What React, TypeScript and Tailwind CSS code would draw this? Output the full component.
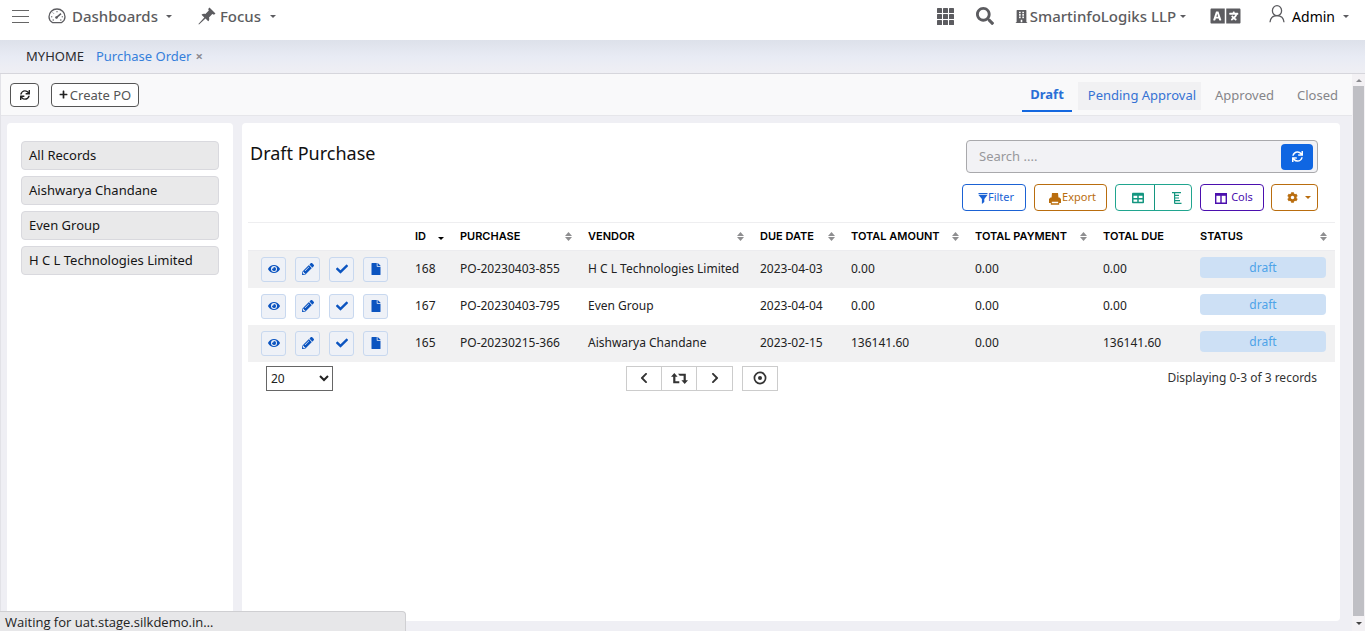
import React from "react";
import {
  FaBuilding,
  FaCheck,
  FaChevronLeft,
  FaChevronRight,
  FaCog,
  FaEye,
  FaFile,
  FaLanguage,
  FaPencilAlt,
  FaPlus,
  FaSearch,
  FaSync,
  FaTable,
} from "react-icons/fa";

const Caret = ({ className = "" }: { className?: string }) => (
  <svg viewBox="0 0 8 4" className={`h-[3px] w-[6px] ${className}`} fill="currentColor" aria-hidden="true">
    <path d="M0 0h8L4 4z" />
  </svg>
);

const GaugeIcon = () => (
  <svg viewBox="0 0 18 16" className="h-4 w-[18px]" fill="none" stroke="currentColor" strokeWidth="1.3" aria-hidden="true">
    <path d="M4 14.2C2.200 13 1 11.200 1 8.700a8 7.700 0 0 1 16 0c0 2.500-1.200 4.300-3 5.500q-.6.5-1.400.5H5.400q-.8 0-1.400-.5z" />
    <path d="M8 9.800 13 5.700" strokeWidth="1.500" />
    <circle cx="8.500" cy="9.500" r="1.300" fill="currentColor" stroke="none" />
    <path d="M9 3v1.300M4.800 4.600l.9.9M3 8.800h1.300M15 8.800h-1.300M4.500 12h1.500M12 12h1.500" strokeWidth="1" />
  </svg>
);

const PinIcon = () => (
  <svg viewBox="0 0 18 18" className="h-[18px] w-[18px]" fill="currentColor" aria-hidden="true">
    <path d="M11.500.5 17.500 6.500 16 7.700l-1.700-.6-3.300 3.300c.6 1.600.2 3-.8 3.900L7.500 11.600 1 17.500l-.6-.6L6.300 10.400 3.500 7.700c1-1 2.400-1.300 3.900-.8l3.400-3.300-.6-1.600z" />
  </svg>
);

const GridIcon = () => (
  <svg viewBox="0 0 17 17" className="h-[17px] w-[17px]" fill="currentColor" aria-hidden="true">
    {[0, 6, 12].map((y) => [0, 6, 12].map((x) => <rect key={`${x}-${y}`} x={x} y={y} width="5" height="5" rx=".6" />))}
  </svg>
);

const UserIcon = () => (
  <svg viewBox="0 0 16 18" className="mb-1 h-[18px] w-4" fill="none" stroke="currentColor" strokeWidth="1.300" aria-hidden="true">
    <ellipse cx="8" cy="5.700" rx="4.600" ry="5" />
    <path d="M1 17.300C1.400 13.200 4 10.700 8 10.700s6.600 2.500 7 6.600" />
  </svg>
);

const FunnelIcon = () => (
  <svg viewBox="0 0 10 11" className="mt-[2px] h-[11px] w-[10px]" fill="currentColor" aria-hidden="true">
    <path d="M.5 0h9v1.300h-9zM.5 2h9L6.300 6v3L3.900 11V6z" />
  </svg>
);

const PrinterIcon = () => (
  <svg viewBox="0 0 12 12" className="mt-[2px] h-3 w-3" fill="currentColor" aria-hidden="true">
    <path d="M3 0h6l.5 5h-7z" />
    <path fillRule="evenodd" d="M1.500 4.500h9L12 6v4h-1.800v1.800H1.800V10H0V6zM2.800 8.700v1.600h6.400V8.700z" />
  </svg>
);

const ColumnsIcon = () => (
  <svg viewBox="0 0 12 11" className="mt-[2px] h-[11px] w-3" fill="none" stroke="currentColor" strokeWidth="1.400" aria-hidden="true">
    <path d="M.7.7h10.600v9.600H.7zM6 2v8" />
    <path d="M0 1.600h12" strokeWidth="2.400" />
  </svg>
);

const TreeIcon = () => (
  <svg viewBox="0 0 10 12" className="h-3 w-[10px]" fill="none" stroke="currentColor" strokeWidth="1.200" aria-hidden="true">
    <path d="M0 .6h9M2.600.6v10.800M2.600 11.400H9.500M2.600 3.400h4.400M2.600 6h4.400M2.600 8.700h5.400" />
  </svg>
);

const RepeatIcon = () => (
  <svg viewBox="0 0 17 11" className="h-[11px] w-[17px]" fill="currentColor" aria-hidden="true">
    <path d="M3.300 0 6.600 3.800H4.400v4.400h3.900v2H2.200V3.800H0zM7 .8h7.800v6.400H17L13.700 11l-3.300-3.800h2.200V2.800H8.700z" />
  </svg>
);

const TargetIcon = () => (
  <svg viewBox="0 0 14 14" className="h-[14px] w-[14px]" aria-hidden="true">
    <circle cx="7" cy="7" r="5.600" fill="none" stroke="currentColor" strokeWidth="1.700" />
    <circle cx="7" cy="7" r="2" fill="currentColor" />
  </svg>
);

const SortIcon = () => (
  <svg viewBox="0 0 7 9" className="h-[9px] w-[7px] shrink-0 text-[#8e8e90]" fill="currentColor" aria-hidden="true">
    <path d="M0 4 3.500 0 7 4zM0 5h7L3.500 9z" />
  </svg>
);

const columns = [
  { label: "ID", width: "w-[45px]", sort: "desc" },
  { label: "PURCHASE", width: "w-32", sort: "both" },
  { label: "VENDOR", width: "", sort: "both" },
  { label: "DUE DATE", width: "w-[91px]", sort: "both" },
  { label: "TOTAL AMOUNT", width: "w-[124px]", sort: "both" },
  { label: "TOTAL PAYMENT", width: "w-32", sort: "both" },
  { label: "TOTAL DUE", width: "w-[97px]", sort: "" },
  { label: "STATUS", width: "w-[143px]", sort: "both" },
];

const rows = [
  ["168", "PO-20230403-855", "H C L Technologies Limited", "2023-04-03", "0.00", "0.00", "0.00"],
  ["167", "PO-20230403-795", "Even Group", "2023-04-04", "0.00", "0.00", "0.00"],
  ["165", "PO-20230215-366", "Aishwarya Chandane", "2023-02-15", "136141.60", "0.00", "136141.60"],
];

const actions = [
  { label: "View", Icon: FaEye },
  { label: "Edit", Icon: FaPencilAlt },
  { label: "Approve", Icon: FaCheck },
  { label: "Document", Icon: FaFile },
];

const vendors = ["All Records", "Aishwarya Chandane", "Even Group", "H C L Technologies Limited"];

function Header() {
  return (
    <header className="flex h-10 shrink-0 items-start justify-between bg-white pr-4 pl-3 text-[14px] font-medium text-[#5c5c60]">
      <nav className="flex h-8 items-center">
        <button aria-label="Toggle menu" className="flex w-[17px] flex-col gap-[5px]">
          <span className="h-px w-full bg-[#666]" />
          <span className="h-px w-full bg-[#666]" />
          <span className="h-px w-full bg-[#666]" />
        </button>
        <button className="ml-[19px] flex items-center">
          <GaugeIcon />
          <span className="ml-[6px] text-[15px] leading-5">Dashboards</span>
          <Caret className="ml-2" />
        </button>
        <button className="ml-[26px] flex items-center">
          <PinIcon />
          <span className="ml-1 text-[15px] leading-5">Focus</span>
          <Caret className="ml-[9px]" />
        </button>
      </nav>
      <div className="flex h-8 items-center">
        <button aria-label="Apps"><GridIcon /></button>
        <button aria-label="Search" className="ml-[22px]"><FaSearch className="size-[18px]" /></button>
        <button className="ml-[21px] flex items-center">
          <FaBuilding className="size-[13px]" />
          <span className="ml-[2px] text-[15px] leading-5">SmartinfoLogiks LLP</span>
          <Caret className="ml-[4px]" />
        </button>
        <button aria-label="Language" className="ml-[24px]"><FaLanguage className="h-6 w-[31px]" /></button>
        <button className="ml-[28px] flex items-center">
          <UserIcon />
          <span className="ml-[7px] font-normal text-black">Admin</span>
          <Caret className="ml-2" />
        </button>
      </div>
    </header>
  );
}

function Toolbar() {
  return (
    <div className="flex h-[42px] shrink-0 items-center justify-between border-b border-[#e6e6ea] bg-[#f9f9fa] pl-[9px]">
      <div className="flex gap-3">
        <button aria-label="Reload" className="flex h-6 w-[29px] items-center justify-center rounded-[4px] border border-[#555] bg-white text-[#222]">
          <FaSync className="size-[10px]" />
        </button>
        <button className="flex h-6 w-[88px] items-center justify-center gap-[2px] rounded-[4px] border border-[#555] bg-white text-[13px] leading-5 text-[#555]">
          <FaPlus className="size-[9px] text-[#222]" />
          Create PO
        </button>
      </div>
      <nav className="flex h-full items-center pt-[3px] pr-1 text-[13px] text-[#858589]">
        <a href="#draft" className="mr-[6px] flex h-8 items-center border-b-2 border-[#1468e0] px-2 font-bold text-[#2a6fd6]">Draft</a>
        <a href="#pending" className="flex h-7 items-center bg-[#f1f1f3] pr-[5px] pl-[10px] text-[#3572d3]">Pending Approval</a>
        <a href="#approved" className="flex h-7 items-center pr-3 pl-[14px]">Approved</a>
        <a href="#closed" className="flex h-7 items-center pr-[10px] pl-[11px]">Closed</a>
      </nav>
    </div>
  );
}

function Sidebar() {
  return (
    <aside className="w-[226px] shrink-0 rounded-t bg-white px-[14px] pt-[18px]">
      <ul className="flex flex-col gap-[6px]">
        {vendors.map((name) => (
          <li key={name}>
            <button className="h-[29px] w-full rounded-[4px] border border-[#d9d9de] bg-[#e9e9ea] px-[7px] text-left text-[13px] text-[#151515]">
              {name}
            </button>
          </li>
        ))}
      </ul>
    </aside>
  );
}

const outline = "flex h-[27px] items-center justify-center rounded-[4px] border text-[11px]";

function Controls() {
  return (
    <div className="flex flex-col items-end">
      <label className="flex h-[33px] w-[352px] items-center rounded-[4px] border border-[#a9a9ac] bg-[#f2f2f5] pr-1 pl-3">
        <input aria-label="Search" placeholder="Search ...." className="min-w-0 flex-1 bg-transparent text-[13px] outline-none placeholder:text-[#98989c]" />
        <button aria-label="Run search" className="flex h-[26px] w-8 items-center justify-center rounded-[4px] bg-[#0f66e2] text-white">
          <FaSync className="size-[11px]" />
        </button>
      </label>
      <div className="mt-[11px] flex">
        <button className={`${outline} w-16 border-[#1b62d4] pl-1 text-[#1b62d4]`}>
          <FunnelIcon />
          Filter
        </button>
        <button className={`${outline} ml-2 w-[73px] gap-px border-[#b96d0e] pl-1 text-[#b96d0e]`}>
          <PrinterIcon />
          Export
        </button>
        <div className="ml-2 flex h-[27px] w-[77px] rounded-[4px] border border-[#20a58f] text-[#149680]">
          <button aria-label="Table view" className="flex w-[39px] items-center justify-center border-r border-[#149680] pl-[6px]">
            <FaTable className="size-[12px]" />
          </button>
          <button aria-label="List view" className="flex flex-1 items-center justify-center pl-2">
            <TreeIcon />
          </button>
        </div>
        <button className={`${outline} ml-2 w-16 gap-1 border-[#4b0fae] pl-1 text-[#4b0fae]`}>
          <ColumnsIcon />
          Cols
        </button>
        <button aria-label="Settings" className={`${outline} ml-[7px] w-[47px] gap-[7px] border-[#b96d0e] pl-2 text-[#b96d0e]`}>
          <FaCog className="size-[11px]" />
          <Caret />
        </button>
      </div>
    </div>
  );
}

function OrdersTable() {
  return (
    <table className="w-full table-fixed border-t border-[#eeeef0] text-left text-[12px] text-[#222]">
      <thead>
        <tr className="h-7 border-b border-[#ececef] font-['Inter',sans-serif] text-[11px] text-black">
          <th className="w-[159px]" aria-label="Actions" />
          {columns.map(({ label, width, sort }) => (
            <th key={label} className={`${width} pr-2 pl-2 font-semibold`}>
              <span className="flex items-center justify-between whitespace-nowrap">
                {label}
                {sort === "both" && <SortIcon />}
                {sort === "desc" && <Caret className="mt-1" />}
              </span>
            </th>
          ))}
        </tr>
      </thead>
      <tbody>
        {rows.map((row) => (
          <tr key={row[0]} className="h-[37px] odd:bg-[#f1f1f2]">
            <td className="pl-[13px]">
              <div className="flex gap-[9px]">
                {actions.map(({ label, Icon }) => (
                  <button key={label} aria-label={label} className="flex size-[25px] items-center justify-center rounded-[3px] border border-[#c8d8ef] bg-[#eef1f7] text-[#0b54c0]">
                    <Icon className="size-[12px]" />
                  </button>
                ))}
              </div>
            </td>
            {row.map((value, i) => (
              <td key={i} className="pl-2 whitespace-nowrap">{value}</td>
            ))}
            <td className="pr-[9px] pl-2">
              <div className="mb-[3px] flex h-[21px] items-center justify-center rounded-[4px] bg-[#cde0f5] text-[12px] text-[#4ea3e8]">draft</div>
            </td>
          </tr>
        ))}
      </tbody>
    </table>
  );
}

function Pager() {
  const cell = "flex h-[23px] w-[35px] items-center justify-center";
  return (
    <div className="mt-1 grid grid-cols-3 items-center pr-[18px] pl-[18px] text-[#333]">
      <select aria-label="Rows per page" defaultValue="20" className="h-[25px] w-[67px] border border-[#666] bg-white text-[12px] text-[#222]">
        <option>20</option>
        <option>50</option>
        <option>100</option>
      </select>
      <div className="flex gap-[9px] pl-[10px]">
        <div className="flex divide-x divide-[#ccc] border border-[#ccc]">
          <button aria-label="Previous" className={cell}><FaChevronLeft className="size-[12px]" /></button>
          <button aria-label="Reload" className={cell}><RepeatIcon /></button>
          <button aria-label="Next" className={cell}><FaChevronRight className="size-[12px]" /></button>
        </div>
        <button aria-label="Locate" className="flex w-9 items-center justify-center border border-[#ccc]"><TargetIcon /></button>
      </div>
      <p className="text-right text-[12px]">Displaying 0-3 of 3 records</p>
    </div>
  );
}

export default function App() {
  return (
    <div className="flex h-screen flex-col overflow-hidden bg-[#efeff4] font-['Noto_Sans',sans-serif]">
      <Header />
      <div className="flex h-[34px] shrink-0 items-center border-b border-[#d6d6dc] bg-linear-to-b from-[#dde1ea] via-[#e8ebf4] to-[#efeff4] pl-[26px] text-[13px]">
        <a href="#home" className="text-[#2b2b2f]">MYHOME</a>
        <a href="#orders" className="ml-3 text-[#357fdb]">Purchase Order</a>
        <button aria-label="Close tab" className="ml-1 text-[13px] font-bold text-[#8c8c92]">×</button>
      </div>
      <div className="flex min-h-0 flex-1">
        <div className="flex min-w-0 flex-1 flex-col border-l border-[#e2e2e7]">
          <Toolbar />
          <div className="flex min-h-0 flex-1 gap-[9px] pt-[7px] pr-3 pl-[6px]">
            <Sidebar />
            <main className="mb-[10px] min-w-0 flex-1 rounded-[4px] bg-white pr-[5px] pl-[6px]">
              <div className="flex justify-between pt-[17px] pr-[17px] pb-[11px] pl-[2px]">
                <h1 className="text-[18px] leading-[26px] text-[#111]">Draft Purchase</h1>
                <Controls />
              </div>
              <OrdersTable />
              <Pager />
            </main>
          </div>
        </div>
        <div className="flex w-[13px] shrink-0 flex-col items-center bg-[#f3f1f4]" aria-hidden="true">
          <span className="flex h-3 items-center text-[#8b8b8f]"><Caret className="rotate-180" /></span>
          <span className="w-[11px] flex-1 bg-[#bfbfc4]" />
          <span className="flex h-[15px] items-center text-[#444]"><Caret /></span>
        </div>
      </div>
      <div className="fixed bottom-0 left-0 h-5 w-[406px] rounded-tr-[4px] border-t border-r border-[#cfcfd2] bg-[#e7e7e9] pl-[5px] font-['Open_Sans',sans-serif] text-[13px] leading-5 text-[#222]">
        Waiting for uat.stage.silkdemo.in…
      </div>
    </div>
  );
}
